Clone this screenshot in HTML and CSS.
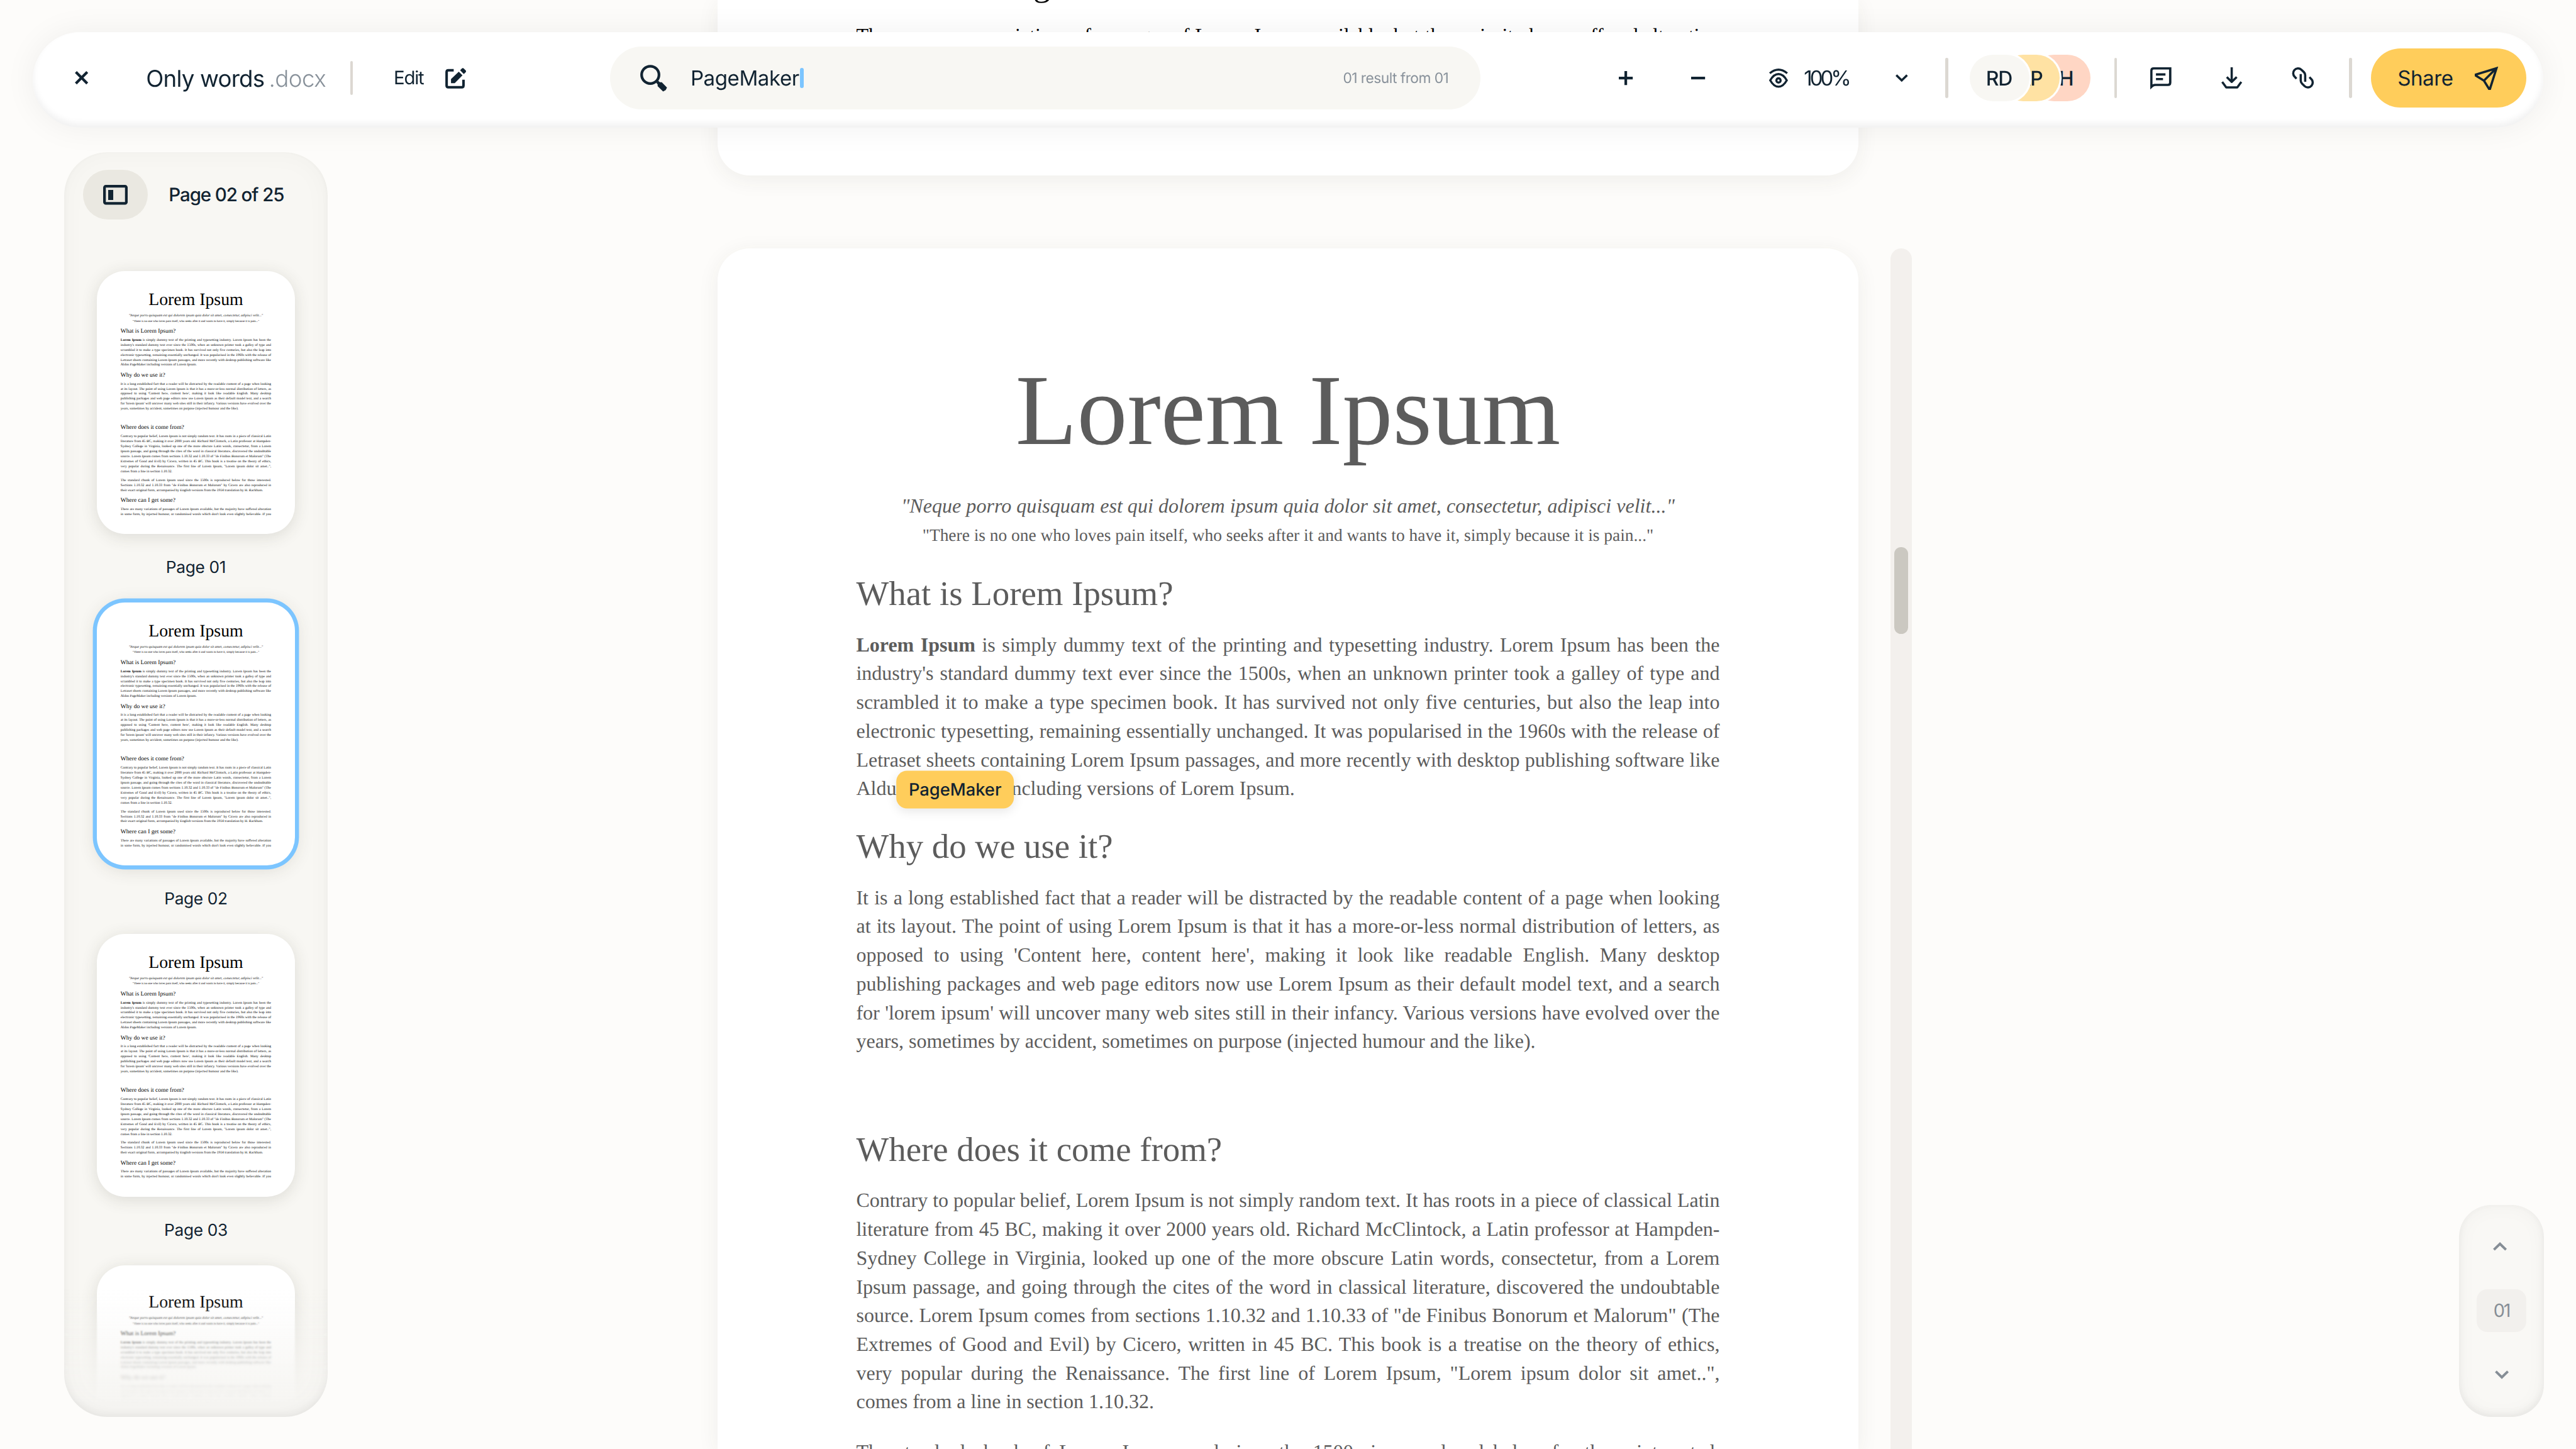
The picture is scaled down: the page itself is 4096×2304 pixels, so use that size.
FILE: index.html
```html
<!DOCTYPE html>
<html lang="en">
<head>
<meta charset="utf-8">
<title>Only words.docx</title>
<link rel="stylesheet" href="styles.css">
</head>
<body>
<header class="bar">
  <svg class="ico close" viewBox="0 0 40 40"><path d="M3 3L37 37M37 3L3 37" stroke-width="8"/></svg>
  <div class="title"><span class="title-name">Only words</span><span class="title-ext">.docx</span></div>
  <i class="sep sep-short"></i>
  <span class="edit-label">Edit</span>
  <svg class="ico edit-icon" viewBox="0 0 62 61"><path d="M25 7H9Q4 7 4 12V52Q4 57 9 57H49Q54 57 54 52V35" stroke-width="7.5"/><path class="fill" d="M17 45V33L40 11L51 22L28 45ZM44 7L50 1Q52 0 54 1L61 8Q62 10 61 12L55 18Z"/></svg>
  <div class="search">
    <svg class="ico search-icon" viewBox="0 0 240 241"><circle cx="90" cy="91" r="78" stroke-width="24"/><path class="fill" d="M160 142L176 157H193L240 205L228 228L205 240L156 192V176L144 163Z"/></svg>
    <span class="search-text">PageMaker</span><i class="caret"></i>
    <span class="search-count">01 result from 01</span>
  </div>
  <svg class="ico plus" viewBox="0 0 42 42"><path d="M21 0V42M0 21H42" stroke-width="8"/></svg>
  <svg class="ico minus" viewBox="0 0 42 42"><path d="M0 21H42" stroke-width="8"/></svg>
  <svg class="ico eye" viewBox="0 0 168 173"><path d="M6 42Q84 -22 162 42M10 105Q42 49 84 49Q126 49 158 105Q126 162 84 162Q42 162 10 105Z" stroke-width="19"/><circle cx="84" cy="106" r="19" stroke-width="19"/></svg>
  <span class="zoom-value">100%</span>
  <svg class="ico chev" viewBox="0 0 111 69"><path d="M7 8L55.500 55L104 8" stroke-width="20"/></svg>
  <i class="sep sep-a"></i>
  <div class="people">
    <span class="person person-1">RD</span><span class="person person-2">AP</span><span class="person person-3">H</span>
  </div>
  <i class="sep sep-b"></i>
  <svg class="ico comment" viewBox="0 0 189 198"><path class="fill" fill-rule="evenodd" d="M0 198V30Q0 0 30 0H189V137Q189 168 158 168H47Q32 168 21 178ZM20 153V30Q20 20 30 20H168V137Q168 148 157 148H42Q30 148 20 153ZM51 53H136V74H51ZM51 95H114V116H51Z"/></svg>
  <svg class="ico download" viewBox="0 0 187 190"><path d="M93 0V128M49 87L93 131L138 87M8 131L44 180H143L179 131" stroke-width="20" stroke-linejoin="round"/></svg>
  <svg class="ico link" viewBox="0 0 190 190"><path d="M37 102L22 86A41 41 0 0 1 80 21L103 43Q115 55 115 70V130M153 88L168 104A41 41 0 0 1 110 169L87 147Q75 135 75 120V60" stroke-width="20"/></svg>
  <i class="sep sep-c"></i>
  <div class="share"><span class="share-label">Share</span><svg class="ico plane" viewBox="0 0 208 207"><path d="M194 14L10 71V80L82 125L127 197H136ZM82 125L188 18" stroke-width="20"/></svg></div>
</header>

<main class="desk">
  <aside class="side">
    <div class="side-head">
      <span class="toggle"><svg class="ico toggle-icon" viewBox="0 0 73 59"><rect x="4" y="4" width="65" height="51" rx="4" stroke-width="8"/><path class="fill" d="M15 15H30V45H15Z"/></svg></span>
      <span class="side-title">Page 02 of 25</span>
    </div>
    <div class="thumbs">
      <div class="thumb"></div><span class="thumb-label">Page 01</span>
      <div class="thumb thumb-active"></div><span class="thumb-label">Page 02</span>
      <div class="thumb"></div><span class="thumb-label">Page 03</span>
      <div class="thumb thumb-last"></div>
    </div>
    <i class="fog fog-1"></i><i class="fog fog-2"></i><i class="fog fog-3"></i>
    <i class="side-rim"></i>
  </aside>

  <section class="pages">
    <article class="page page-prev">
      <div class="doc">
        <h2>Where can I get some?</h2>
        <p><span>There are many variations of passages of Lorem Ipsum available, but the majority have suffered alteration</span></p>
      </div>
    </article>
    <article class="page page-now">
      <div class="doc" id="doc">
        <h1>Lorem Ipsum</h1>
        <div class="quote">"Neque porro quisquam est qui dolorem ipsum quia dolor sit amet, consectetur, adipisci velit..."</div>
        <div class="quote-en">"There is no one who loves pain itself, who seeks after it and wants to have it, simply because it is pain..."</div>
        <h2 class="first">What is Lorem Ipsum?</h2>
        <p>
          <span><b>Lorem Ipsum</b> is simply dummy text of the printing and typesetting industry. Lorem Ipsum has been the</span>
          <span>industry's standard dummy text ever since the 1500s, when an unknown printer took a galley of type and</span>
          <span>scrambled it to make a type specimen book. It has survived not only five centuries, but also the leap into</span>
          <span>electronic typesetting, remaining essentially unchanged. It was popularised in the 1960s with the release of</span>
          <span>Letraset sheets containing Lorem Ipsum passages, and more recently with desktop publishing software like</span>
          <span class="end">Aldus <em class="hit">PageMaker<strong class="chip">PageMaker</strong></em> including versions of Lorem Ipsum.</span>
        </p>
        <h2>Why do we use it?</h2>
        <p>
          <span>It is a long established fact that a reader will be distracted by the readable content of a page when looking</span>
          <span>at its layout. The point of using Lorem Ipsum is that it has a more-or-less normal distribution of letters, as</span>
          <span>opposed to using 'Content here, content here', making it look like readable English. Many desktop</span>
          <span>publishing packages and web page editors now use Lorem Ipsum as their default model text, and a search</span>
          <span>for 'lorem ipsum' will uncover many web sites still in their infancy. Various versions have evolved over the</span>
          <span class="end">years, sometimes by accident, sometimes on purpose (injected humour and the like).</span>
        </p>
        <h2 class="apart">Where does it come from?</h2>
        <p>
          <span>Contrary to popular belief, Lorem Ipsum is not simply random text. It has roots in a piece of classical Latin</span>
          <span>literature from 45 BC, making it over 2000 years old. Richard McClintock, a Latin professor at Hampden-</span>
          <span>Sydney College in Virginia, looked up one of the more obscure Latin words, consectetur, from a Lorem</span>
          <span>Ipsum passage, and going through the cites of the word in classical literature, discovered the undoubtable</span>
          <span>source. Lorem Ipsum comes from sections 1.10.32 and 1.10.33 of "de Finibus Bonorum et Malorum" (The</span>
          <span>Extremes of Good and Evil) by Cicero, written in 45 BC. This book is a treatise on the theory of ethics,</span>
          <span>very popular during the Renaissance. The first line of Lorem Ipsum, "Lorem ipsum dolor sit amet..",</span>
          <span class="end">comes from a line in section 1.10.32.</span>
        </p>
        <p>
          <span>The standard chunk of Lorem Ipsum used since the 1500s is reproduced below for those interested.</span>
          <span>Sections 1.10.32 and 1.10.33 from "de Finibus Bonorum et Malorum" by Cicero are also reproduced in</span>
          <span class="end">their exact original form, accompanied by English versions from the 1914 translation by H. Rackham.</span>
        </p>
        <h2>Where can I get some?</h2>
        <p>
          <span>There are many variations of passages of Lorem Ipsum available, but the majority have suffered alteration</span>
          <span>in some form, by injected humour, or randomised words which don't look even slightly believable. If you</span>
        </p>
      </div>
    </article>
  </section>

  <div class="track"><i class="track-thumb"></i></div>

  <nav class="pager">
    <svg class="ico pager-up" viewBox="0 0 111 69"><path d="M7 61L55.500 14L104 61" stroke-width="20"/></svg>
    <span class="pager-num">01</span>
    <svg class="ico pager-down" viewBox="0 0 111 69"><path d="M7 8L55.500 55L104 8" stroke-width="20"/></svg>
  </nav>
</main>
<script src="thumbs.js"></script>
</body>
</html>
```
FILE: styles.css
```css
/* the canvas is 192rem by 108rem */
html { font-size: 21.3333px; }
* { box-sizing: border-box; }
body {
  margin: 0;
  width: 192rem;
  height: 108rem;
  overflow: hidden;
  background: #fdfcfa;
  color: #112331;
  font-family: Inter, "Liberation Sans", sans-serif;
  text-rendering: geometricPrecision;
}
.ico { display: block; flex: none; fill: none; stroke: currentColor; overflow: visible; }
.ico .fill { fill: currentColor; stroke: none; }

/* toolbar */
.bar {
  position: fixed;
  z-index: 5;
  top: 2.4rem;
  left: 2.45rem;
  width: 187.1rem;
  height: 7.1rem;
  padding-bottom: .26rem;
  display: flex;
  align-items: center;
  border-radius: 3.55rem;
  background: #fff;
  box-shadow: 0 0 2.4rem rgba(30, 30, 20, .06), inset 0 -.3rem .5rem rgba(0, 0, 0, .06);
  white-space: nowrap;
}
.bar > * { flex: none; }
.close { width: 1rem; height: 1rem; margin-left: 3.14rem; }
.title { width: 13.4rem; margin-left: 4.3rem; display: flex; justify-content: space-between; font-size: 1.72rem; }
.title-name { letter-spacing: -.038rem; }
.title-ext { color: #88919a; letter-spacing: -.025rem; font-weight: 300; }
.sep { width: .2rem; height: 3rem; border-radius: .1rem; background: #dcd8d2; }
.sep-short { height: 2.5rem; margin-left: 1.8rem; }
.edit-label { width: 2.3rem; margin-left: 3.06rem; font-size: 1.38rem; letter-spacing: -.06rem; }
.edit-icon { width: 1.56rem; height: 1.54rem; margin-left: 1.52rem; }
.search {
  width: 64.9rem;
  height: 4.7rem;
  margin-left: 10.74rem;
  padding: 0 2.4rem 0 2.25rem;
  display: flex;
  align-items: center;
  border-radius: 2.35rem;
  background: #f8f7f3;
}
.search-icon { width: 2rem; height: 2rem; }
.search-text { width: 7.95rem; margin-left: 1.75rem; font-size: 1.55rem; letter-spacing: -.02rem; }
.caret { width: .3rem; height: 1.5rem; margin-left: .2rem; border-radius: .15rem; background: #7cc5ff; }
.search-count { margin-left: auto; color: #88919a; font-size: 1.07rem; letter-spacing: -.026rem; }
.plus { width: 1.04rem; height: 1.04rem; margin-left: 10.27rem; }
.minus { width: 1.04rem; height: 1.04rem; margin-left: 4.37rem; }
.eye { width: 1.4rem; height: 1.45rem; margin-left: 4.77rem; }
.zoom-value { width: 3.28rem; margin-left: 1.2rem; font-size: 1.55rem; letter-spacing: -.19rem; }
.chev { width: .92rem; height: .58rem; margin-left: 3.57rem; }
.sep-a { margin-left: 2.78rem; }
.people { width: 9rem; margin-left: 1.6rem; display: flex; }
.person {
  flex: none;
  width: 4.45rem;
  height: 3.5rem;
  padding-right: 1.3rem;
  display: flex;
  align-items: center;
  justify-content: flex-end;
  border-radius: 1.75rem;
  font-size: 1.5rem;
  font-weight: 500;
  letter-spacing: -.06rem;
}
.person + .person { margin-left: -2.17rem; }
.person-1 { z-index: 3; background: #f8f7f3; box-shadow: 0 0 0 .15rem #fff; }
.person-2 { z-index: 2; background: #ffe2a3; box-shadow: 0 0 0 .15rem #fff; }
.person-3 { z-index: 1; background: #ffd6c4; }
.sep-b { margin-left: 1.8rem; }
.comment { width: 1.58rem; height: 1.65rem; margin-left: 2.47rem; }
.download { width: 1.56rem; height: 1.58rem; margin-left: 3.73rem; }
.link { width: 1.58rem; height: 1.58rem; margin-left: 3.72rem; }
.sep-c { margin-left: 2.66rem; }
.share {
  width: 11.6rem;
  height: 4.4rem;
  margin-left: 1.4rem;
  padding: 0 2.1rem 0 2.0rem;
  display: flex;
  align-items: center;
  justify-content: space-between;
  border-radius: 2.2rem;
  background: #ffcd5b;
}
.share-label { font-size: 1.55rem; letter-spacing: -.02rem; }
.plane { width: 1.74rem; height: 1.73rem; }

/* workspace */
.desk { height: 108rem; padding: 0 2.4rem 0 4.8rem; display: flex; align-items: flex-start; overflow: hidden; }

.side {
  position: relative;
  flex: none;
  width: 19.6rem;
  height: 94.25rem;
  margin-top: 11.35rem;
  border-radius: 3.2rem;
  background: #f8f7f3;
  overflow: hidden;
}
.side-head { height: 8.85rem; padding: 1.33rem 0 0 1.4rem; display: flex; align-items: flex-start; }
.toggle { width: 4.8rem; height: 3.7rem; display: flex; align-items: center; justify-content: center; border-radius: 1.85rem; background: #eae8e1; }
.toggle-icon { width: 1.83rem; height: 1.48rem; }
.side-title { margin-left: 1.58rem; line-height: 3.78rem; font-size: 1.38rem; font-weight: 500; letter-spacing: -.05rem; white-space: nowrap; }
.thumbs { display: flex; flex-direction: column; align-items: center; }
.thumb {
  flex: none;
  width: 14.8rem;
  height: 19.6rem;
  padding-top: .06rem;
  border-radius: 2.1rem;
  background: #fff;
  box-shadow: 0 .2rem 1.2rem rgba(60, 55, 40, .14);
  font-size: .2605rem;
  color: #000;
  overflow: hidden;
}
.thumb-active { box-shadow: 0 0 0 .3rem #7cc5ff, 0 .2rem 1.4rem rgba(60, 55, 40, .16); }
.thumb-last { padding-top: .68rem; }
.thumb-label { height: 5.1rem; line-height: 5.07rem; font-size: 1.23rem; letter-spacing: -.015rem; }
.fog { position: absolute; left: 0; right: 0; bottom: 0; }
.fog-1 { height: 8.6rem; backdrop-filter: blur(1px); mask-image: linear-gradient(transparent, #000 2.4rem); }
.fog-2 { height: 6rem; backdrop-filter: blur(2px); mask-image: linear-gradient(transparent, #000 3rem); }
.fog-3 { height: 9.6rem; background: linear-gradient(rgba(246, 245, 242, 0), rgba(246, 245, 242, .1) 1.5rem, rgba(246, 245, 242, .3) 3.2rem, rgba(246, 245, 242, .78) 6.6rem, #f6f5f2 8.8rem); }
.side-rim { position: absolute; inset: 0; border-radius: 3.2rem; box-shadow: inset 0 0 2rem rgba(40, 40, 40, .03), inset 0 -.2rem .6rem rgba(0, 0, 0, .05); }

.pages { flex: none; width: 85rem; margin-left: 29.1rem; }
.page { background: #fff; box-shadow: 0 .3rem 1.6rem rgba(60, 55, 40, .07); }
.page-prev { height: 13.1rem; margin-bottom: 5.4rem; border-radius: 0 0 2.4rem 2.4rem; font-size: 1.5rem; color: #000; }
.page-now { height: 89.5rem; border-radius: 2.4rem 2.4rem 0 0; font-size: 1.5rem; color: #5c5c5c; }

/* document text, sized in em so thumbnails reuse it */
.doc { padding: 5.54em 6.88em 0; font-family: "Liberation Serif", "Times New Roman", serif; white-space: nowrap; }
.doc h1 { margin: 0; font-size: 5em; line-height: 1; font-weight: 400; text-align: center; }
.doc h2 { margin: .77em 0 .56em; font-size: 1.7143em; line-height: 1; font-weight: 400; }
.doc h2.first { margin-top: .78em; }
.doc h2.apart { margin-top: 2.22em; }
.doc p { margin: 0 0 1.0714em; line-height: 1.4286em; }
.doc p:has(+ h2) { margin-bottom: 0; }
.doc p span { display: block; text-align: justify; text-align-last: justify; }
.doc p .end { text-align-last: left; }
.quote { margin-top: 1.55em; line-height: 1.4286em; font-style: italic; text-align: center; letter-spacing: .0015em; }
.quote-en { margin-top: .05em; font-size: .857em; line-height: 1.6667em; text-align: center; }

/* the previous page is scrolled up, its heading mostly off screen */
.page-prev .doc { padding-top: 0; }
.page-prev .doc h2 { margin-top: 0; transform: translateY(-2.44rem); }
.page-prev .doc p { transform: translateY(-2.44rem); }

.hit { position: relative; font-style: normal; }
.chip {
  position: absolute;
  left: 50%;
  top: 50%;
  width: 8.8rem;
  height: 2.8rem;
  transform: translate(-50%, -46%);
  border-radius: .8rem;
  background: #ffcd5b;
  box-shadow: 0 .2rem .8rem rgba(0, 0, 0, .1);
  color: #112331;
  font: 500 1.28rem/2.8rem Inter, "Liberation Sans", sans-serif;
  text-align: center;
  text-align-last: center;
}

.track { flex: none; width: 1.6rem; height: 89.5rem; margin: 18.5rem 0 0 2.4rem; padding: 22.3rem .3rem 0; border-radius: .8rem .8rem 0 0; background: #f3f0ed; }
.track-thumb { display: block; width: 1rem; height: 6.45rem; border-radius: .5rem; background: #cbc8c1; }

.pager {
  flex: none;
  width: 6.3rem;
  height: 15.8rem;
  margin: 89.8rem 0 0 auto;
  padding: 2.8rem 0;
  display: flex;
  flex-direction: column;
  align-items: center;
  justify-content: space-between;
  border-radius: 2.4rem;
  background: #f9f8f5;
  box-shadow: inset 0 0 1.6rem rgba(40, 40, 40, .035), inset 0 -.2rem .6rem rgba(0, 0, 0, .06);
  color: #868e96;
}
.pager-up, .pager-down { width: 1.04rem; height: .64rem; }
.pager-up { margin-right: .2rem; }
.pager-num { width: 3.7rem; height: 3.2rem; border-radius: .8rem; background: #f2f0ed; font-size: 1.35rem; line-height: 3.2rem; text-align: center; letter-spacing: -.1rem; }
```
FILE: thumbs.js
```js
// Fill each thumbnail with a small copy of the document.
const source = document.getElementById('doc');
document.querySelectorAll('.thumb').forEach((thumb) => {
  const copy = source.cloneNode(true);
  copy.removeAttribute('id');
  copy.querySelector('.chip').remove();
  thumb.append(copy);
});
```
